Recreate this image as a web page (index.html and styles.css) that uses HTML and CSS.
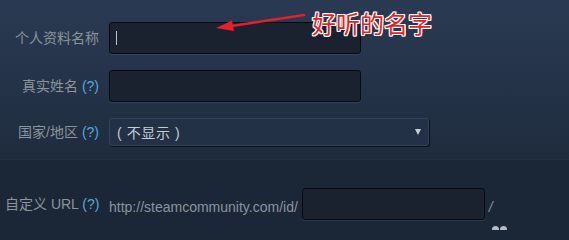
FILE: index.html
```html
<!DOCTYPE html>
<html lang="zh-CN">
<head>
<meta charset="utf-8">
<title>编辑个人资料</title>
<link rel="stylesheet" href="styles.css">
</head>
<body>
<div class="page">
  <section class="upper">
    <div class="row">
      <div class="label">个人资料名称</div>
      <div class="field"><span class="caret"></span></div>
    </div>
    <div class="row">
      <div class="label">真实姓名 <span class="help">(?)</span></div>
      <div class="field"></div>
    </div>
    <div class="row">
      <div class="label">国家/地区 <span class="help">(?)</span></div>
      <div class="select"><span class="select-text">( 不显示 )</span><span class="select-arrow"></span></div>
    </div>
  </section>
  <section class="lower">
    <div class="row">
      <div class="label">自定义 URL <span class="help">(?)</span></div>
      <span class="url-prefix">http://steamcommunity.com/id/</span>
      <div class="field field-url"></div>
      <span class="url-suffix">/</span>
    </div>
  </section>

  <svg class="annot-arrow" width="569" height="60" viewBox="0 0 569 60">
    <line x1="304" y1="15" x2="228" y2="26.5" stroke="#e3202b" stroke-width="2.6" stroke-linecap="round"/>
    <polygon points="216,28 232,20.5 234,31" fill="#e3202b"/>
  </svg>
  <div class="annot-text">好听的名字</div>
  <div class="blob"><span></span><span></span></div>
</div>
</body>
</html>
```

FILE: styles.css
```css
html, body {
  margin: 0;
  padding: 0;
}
body {
  width: 569px;
  height: 230px;
  overflow: hidden;
  background: #1b2737;
  font-family: "Liberation Sans", "Noto Sans CJK SC", Arial, sans-serif;
  font-size: 14px;
}
.page {
  position: relative;
  width: 569px;
  height: 230px;
  overflow: hidden;
}
.upper {
  box-sizing: border-box;
  height: 160px;
  padding-top: 22px;
  background: linear-gradient(180deg, #2a3a52 0%, #25344a 45%, #1f2c3e 100%);
  border-bottom: 1px solid #223043;
}
.lower {
  box-sizing: border-box;
  height: 70px;
  padding-top: 28px;
  background: #1b2737;
}
.row {
  display: flex;
  align-items: center;
  margin-bottom: 16px;
}
.label {
  width: 94px;
  margin-left: 5px;
  margin-right: 10px;
  text-align: right;
  white-space: nowrap;
  color: #8b939b;
  font-size: 14px;
  line-height: 18px;
}
.help {
  color: #56a7de;
}
.field {
  position: relative;
  box-sizing: border-box;
  width: 252px;
  height: 32px;
  background: #1a2230;
  border: 1px solid #070a0e;
  border-radius: 3px;
  box-shadow: 0 1px 0 rgba(120, 140, 170, 0.18);
}
.caret {
  position: absolute;
  left: 6px;
  top: 8px;
  width: 1px;
  height: 14px;
  background: #b9c2cb;
}
.select {
  position: relative;
  box-sizing: border-box;
  width: 320px;
  height: 28px;
  display: flex;
  align-items: center;
  padding-left: 7px;
  background: #233147;
  border: 1px solid #31425a;
  border-radius: 3px;
  box-shadow: 1px 1px 0 #0b1017;
}
.select-text {
  color: #c3cdd6;
  font-size: 14px;
  letter-spacing: 0.6px;
  white-space: pre;
}
.select-arrow {
  position: absolute;
  right: 7px;
  top: 10px;
  width: 0;
  height: 0;
  border-left: 3.5px solid transparent;
  border-right: 3.5px solid transparent;
  border-top: 6px solid #c6ced6;
}
.url-prefix {
  color: #8b939b;
  font-size: 14px;
  margin-top: 5px;
  margin-right: 4px;
}
.field-url {
  width: 183px;
}
.url-suffix {
  color: #8b939b;
  margin-left: 4px;
  margin-top: 5px;
  font-style: italic;
}
.annot-arrow {
  position: absolute;
  left: 0;
  top: 0;
}
.annot-text {
  position: absolute;
  left: 312px;
  top: 9px;
  font-family: "Noto Sans CJK SC", sans-serif;
  font-size: 24px;
  line-height: 28px;
  color: #ec1c24;
  text-shadow: 1px 0 0 #fff, -1px 0 0 #fff, 0 1px 0 #fff, 0 -1px 0 #fff,
    1px 1px 0 #fff, -1px -1px 0 #fff, 1px -1px 0 #fff, -1px 1px 0 #fff;
}
.blob {
  position: absolute;
  left: 492px;
  top: 226px;
  display: flex;
  gap: 1px;
}
.blob span {
  width: 7px;
  height: 7px;
  border-radius: 50%;
  background: #b8bcc2;
}
```
